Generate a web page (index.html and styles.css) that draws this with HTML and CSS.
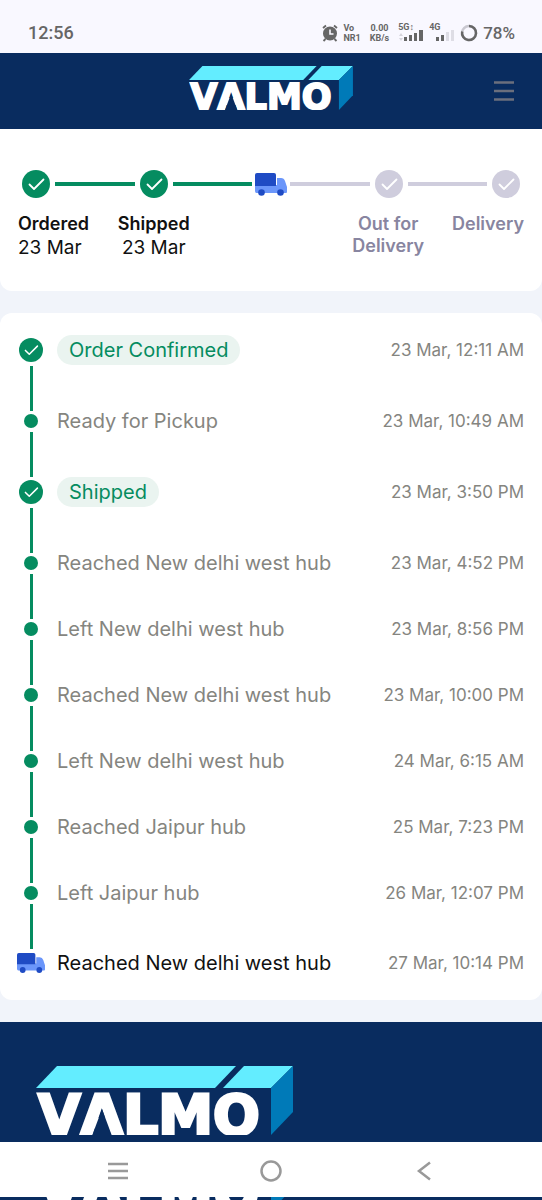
FILE: index.html
```
<!DOCTYPE html>
<html lang="en">
<head>
  <meta charset="UTF-8">
  <meta name="viewport" content="width=device-width, initial-scale=1.0">
  <title>Valmo Tracking</title>
  <link rel="stylesheet" href="styles.css">
</head>
<body>

<!-- shared icons -->
<svg class="sprite" aria-hidden="true">
  <symbol id="logo" viewBox="0 0 257 69">
    <path fill="#63edff" d="M21 0H200L179 22H0Z"/>
    <path fill="#63edff" d="M208 0H257L235 22H187Z"/>
    <path fill="#007ab8" d="M235 22L257 0V46L235 69Z"/>
    <text class="logo-text" x="2" y="68">VALMO</text>
    <path fill="#092c5f" d="M66 43L76 70H56Z"/>
  </symbol>
  <symbol id="check" viewBox="0 0 28 28">
    <circle cx="14" cy="14" r="14"/>
    <path fill="none" stroke="#fff" stroke-width="1.8" stroke-linecap="round" stroke-linejoin="round" d="M7.5 14.5L12 19L21.5 9.5"/>
  </symbol>
  <symbol id="truck" viewBox="0 0 32 23">
    <path fill="#6b96fa" d="M0 12H22V5H26Q29 5 30 8L32 14V19Q32 20 31 20H1.500Q0 20 0 18Z"/>
    <path fill="#1f4bc4" d="M2 0H19Q21 0 21 2V13H0V2Q0 0 2 0Z"/>
    <circle cx="6.500" cy="19.500" r="3.300" fill="#1f4bc4"/>
    <circle cx="25.500" cy="19.500" r="3.300" fill="#1f4bc4"/>
  </symbol>
</svg>

<div class="status-bar">
  <span class="clock">12:56</span>
  <div class="status-icons">
    <svg class="alarm" viewBox="0 0 16 18" width="16" height="18">
      <circle cx="8" cy="9.500" r="7" fill="#666"/>
      <path d="M8 5.500V10H11.500" fill="none" stroke="#f9f8ff" stroke-width="1.600"/>
      <path d="M1 4L4 1.500M15 4L12 1.500M3.500 15L1.500 17M12.500 15L14.500 17" stroke="#666" stroke-width="1.800"/>
    </svg>
    <span class="mini">Vo<br>NR1</span>
    <span class="mini speed">0.00<br>KB/s</span>
    <div class="signal">
      <span>5G↕</span>
      <svg viewBox="0 0 26 13" width="26" height="13">
        <path d="M1 8L3 5L5 8ZM1 10L3 13L5 10Z" fill="#d5d4dc"/>
        <path d="M6 9H9V13H6ZM11 7H14V13H11ZM16 5H19V13H16ZM21 2H25V13H21Z" fill="#666"/>
      </svg>
    </div>
    <div class="signal">
      <span>4G</span>
      <svg viewBox="0 0 26 13" width="26" height="13">
        <path d="M7 9H10V13H7ZM12 7H15V13H12Z" fill="#666"/>
        <path d="M17 4H20V13H17ZM22 2H25V13H22Z" fill="#dedde5"/>
      </svg>
    </div>
    <svg class="ring" viewBox="0 0 18 18" width="18" height="18">
      <circle cx="9" cy="9" r="7" fill="none" stroke="#c9c8d0" stroke-width="2.500"/>
      <path d="M9 2A7 7 0 1 1 2.200 7.500" fill="none" stroke="#666" stroke-width="2.500"/>
    </svg>
    <span class="battery">78%</span>
  </div>
</div>

<header class="header">
  <svg class="logo-small" role="img" aria-label="Valmo"><use href="#logo"/></svg>
  <button class="menu" aria-label="Menu">
    <svg viewBox="0 0 20 20" width="20" height="20"><path d="M0 1.500H20M0 10H20M0 18.500H20" stroke="#6b6f7d" stroke-width="2.500"/></svg>
  </button>
</header>

<main>
  <section class="card progress">
    <div class="track">
      <svg class="step done"><use href="#check"/></svg>
      <span class="bar done"></span>
      <svg class="step done"><use href="#check"/></svg>
      <span class="bar done"></span>
      <svg class="step-truck"><use href="#truck"/></svg>
      <span class="bar"></span>
      <svg class="step"><use href="#check"/></svg>
      <span class="bar"></span>
      <svg class="step"><use href="#check"/></svg>
    </div>
    <div class="step-labels">
      <div class="first done"><b>Ordered</b><span>23 Mar</span></div>
      <div class="done"><b>Shipped</b><span>23 Mar</span></div>
      <div></div>
      <div><b>Out for<br>Delivery</b></div>
      <div class="last"><b>Delivery</b></div>
    </div>
  </section>

  <section class="card">
    <ol class="timeline">
      <li class="major">
        <div class="marker"><svg class="tick"><use href="#check"/></svg></div>
        <div class="event"><span class="pill">Order Confirmed</span><time>23 Mar, 12:11 AM</time></div>
      </li>
      <li>
        <div class="marker"><i class="dot"></i></div>
        <div class="event"><span>Ready for Pickup</span><time>23 Mar, 10:49 AM</time></div>
      </li>
      <li class="major">
        <div class="marker"><svg class="tick"><use href="#check"/></svg></div>
        <div class="event"><span class="pill">Shipped</span><time>23 Mar, 3:50 PM</time></div>
      </li>
      <li>
        <div class="marker"><i class="dot"></i></div>
        <div class="event"><span>Reached New delhi west hub</span><time>23 Mar, 4:52 PM</time></div>
      </li>
      <li>
        <div class="marker"><i class="dot"></i></div>
        <div class="event"><span>Left New delhi west hub</span><time>23 Mar, 8:56 PM</time></div>
      </li>
      <li>
        <div class="marker"><i class="dot"></i></div>
        <div class="event"><span>Reached New delhi west hub</span><time>23 Mar, 10:00 PM</time></div>
      </li>
      <li>
        <div class="marker"><i class="dot"></i></div>
        <div class="event"><span>Left New delhi west hub</span><time>24 Mar, 6:15 AM</time></div>
      </li>
      <li>
        <div class="marker"><i class="dot"></i></div>
        <div class="event"><span>Reached Jaipur hub</span><time>25 Mar, 7:23 PM</time></div>
      </li>
      <li>
        <div class="marker"><i class="dot"></i></div>
        <div class="event"><span>Left Jaipur hub</span><time>26 Mar, 12:07 PM</time></div>
      </li>
      <li class="current">
        <div class="marker"><svg class="truck"><use href="#truck"/></svg></div>
        <div class="event"><span>Reached New delhi west hub</span><time>27 Mar, 10:14 PM</time></div>
      </li>
    </ol>
  </section>
</main>

<footer class="footer">
  <svg class="logo-large" role="img" aria-label="Valmo"><use href="#logo"/></svg>
</footer>

<nav class="nav-bar">
  <button aria-label="Recent apps">
    <svg viewBox="0 0 22 22" width="22" height="22"><path d="M1 4H21M1 11H21M1 18H21"/></svg>
  </button>
  <button aria-label="Home">
    <svg viewBox="0 0 22 22" width="22" height="22"><circle cx="11" cy="11" r="9.500"/></svg>
  </button>
  <button aria-label="Back">
    <svg viewBox="0 0 22 22" width="22" height="22"><path d="M17 2.500L6 11L17 19.500"/></svg>
  </button>
</nav>

<!-- footer showing below the nav bar -->
<div class="under-nav">
  <svg class="logo-edge" viewBox="0 55 257 3" aria-hidden="true"><use href="#logo" width="257" height="69"/></svg>
</div>

</body>
</html>
```
FILE: styles.css
```
* {
  box-sizing: border-box;
}
body {
  margin: 0;
  background-color: #f1f4fa;
  font-family: Inter, "Noto Sans", sans-serif;
  color: #111;
}
button {
  display: flex;
  padding: 0;
  border: none;
  background: none;
  cursor: pointer;
}
.sprite {
  display: none;
}
.logo-text {
  font-family: "DejaVu Sans", sans-serif;
  font-size: 55px;
  font-weight: 700;
  font-kerning: none;
  fill: #fff;
  stroke: #fff;
  stroke-width: 3px;
}

/* status bar */
.status-bar {
  display: flex;
  justify-content: space-between;
  align-items: center;
  height: 53px;
  padding: 12px 27px 0 28px;
  background-color: #f9f8ff;
  color: #666;
  font-family: Roboto, sans-serif;
}
.clock,
.battery {
  font-size: 18px;
  font-weight: 500;
}
.battery {
  font-size: 17px;
}
.status-icons {
  display: flex;
  align-items: center;
  gap: 5px;
}
.mini {
  font-size: 9px;
  line-height: 10px;
  font-weight: 700;
}
.speed {
  margin: 0 4px;
  text-align: center;
}
.signal {
  display: flex;
  flex-direction: column;
  font-size: 9px;
  line-height: 7px;
  font-weight: 700;
}
.signal svg {
  margin-top: -3px;
}

/* header */
.header {
  display: grid;
  grid-template-columns: 1fr auto 1fr;
  align-items: center;
  height: 76px;
  padding: 0 28px;
  background-color: #092c5f;
}
.logo-small {
  grid-column: 2;
  width: 164px;
  height: 44px;
  margin-bottom: 6px;
}
.menu {
  justify-self: end;
}

/* cards */
main {
  display: flex;
  flex-direction: column;
  gap: 22px;
  margin-bottom: 22px;
}
.card {
  padding: 25px 18px 26px 17px;
  border-radius: 12px;
  background-color: #fff;
}
.progress {
  padding: 41px 18px 30px;
  border-radius: 0 0 12px 12px;
}
.track {
  display: flex;
  align-items: center;
  gap: 5px;
  padding: 0 4px;
}
.step {
  width: 28px;
  height: 28px;
  fill: #cfcddd;
}
.step.done,
.tick {
  fill: #058c60;
}
.step-truck {
  width: 32px;
  height: 23px;
  margin: 0 -2px;
}
.bar {
  flex: 1;
  height: 4px;
  background-color: #cfcddd;
}
.bar.done {
  background-color: #058c60;
}
.step-labels {
  display: grid;
  grid-template-columns: 77fr 117fr 117fr 117fr 77fr;
  margin-top: 15px;
  text-align: center;
  color: #8885a0;
}
.step-labels b {
  display: block;
  font-size: 18px;
  line-height: 22px;
  font-weight: 600;
}
.step-labels span {
  font-size: 19px;
  line-height: 26px;
}
.step-labels .first {
  text-align: left;
}
.step-labels .last {
  text-align: right;
}
.step-labels .done {
  color: #111;
}

/* timeline */
.timeline {
  margin: 0;
  padding: 0;
  list-style: none;
}
.timeline li {
  display: flex;
  gap: 12px;
}
.marker {
  display: flex;
  flex-direction: column;
  align-items: center;
  width: 28px;
}
.timeline li:not(:last-child) .marker::after {
  content: "";
  width: 3px;
  height: 45px;
  margin: 4px 0 3px;
  background-color: #058c60;
}
.tick {
  width: 24px;
  height: 24px;
}
.dot {
  width: 14px;
  height: 14px;
  border-radius: 50%;
  background-color: #058c60;
}
.truck {
  width: 28px;
  height: 22px;
}
.event {
  display: flex;
  flex: 1;
  justify-content: space-between;
  align-items: center;
  height: 14px;
  font-size: 20px;
  color: #85857f;
}
.event time {
  font-size: 17px;
}
.major .event {
  height: 24px;
}
.current .event {
  height: 22px;
}
.current .event span {
  color: #111;
}
.pill {
  padding: 0 12px;
  border-radius: 15px;
  background-color: #eaf4f0;
  color: #058c60;
  line-height: 30px;
}

/* footer */
.footer {
  height: 120px;
  padding: 44px 36px 0;
  background-color: #092c5f;
}
.logo-large {
  display: block;
  width: 257px;
  height: 69px;
}
.nav-bar {
  display: flex;
  justify-content: space-around;
  align-items: center;
  height: 55px;
  padding: 3px 41px 0;
  background-color: #fff;
}
.nav-bar svg {
  fill: none;
  stroke: #999;
  stroke-width: 2.5;
}
.under-nav {
  padding-left: 36px;
  background-color: #092c5f;
}
.logo-edge {
  display: block;
  width: 257px;
  height: 3px;
}
```
